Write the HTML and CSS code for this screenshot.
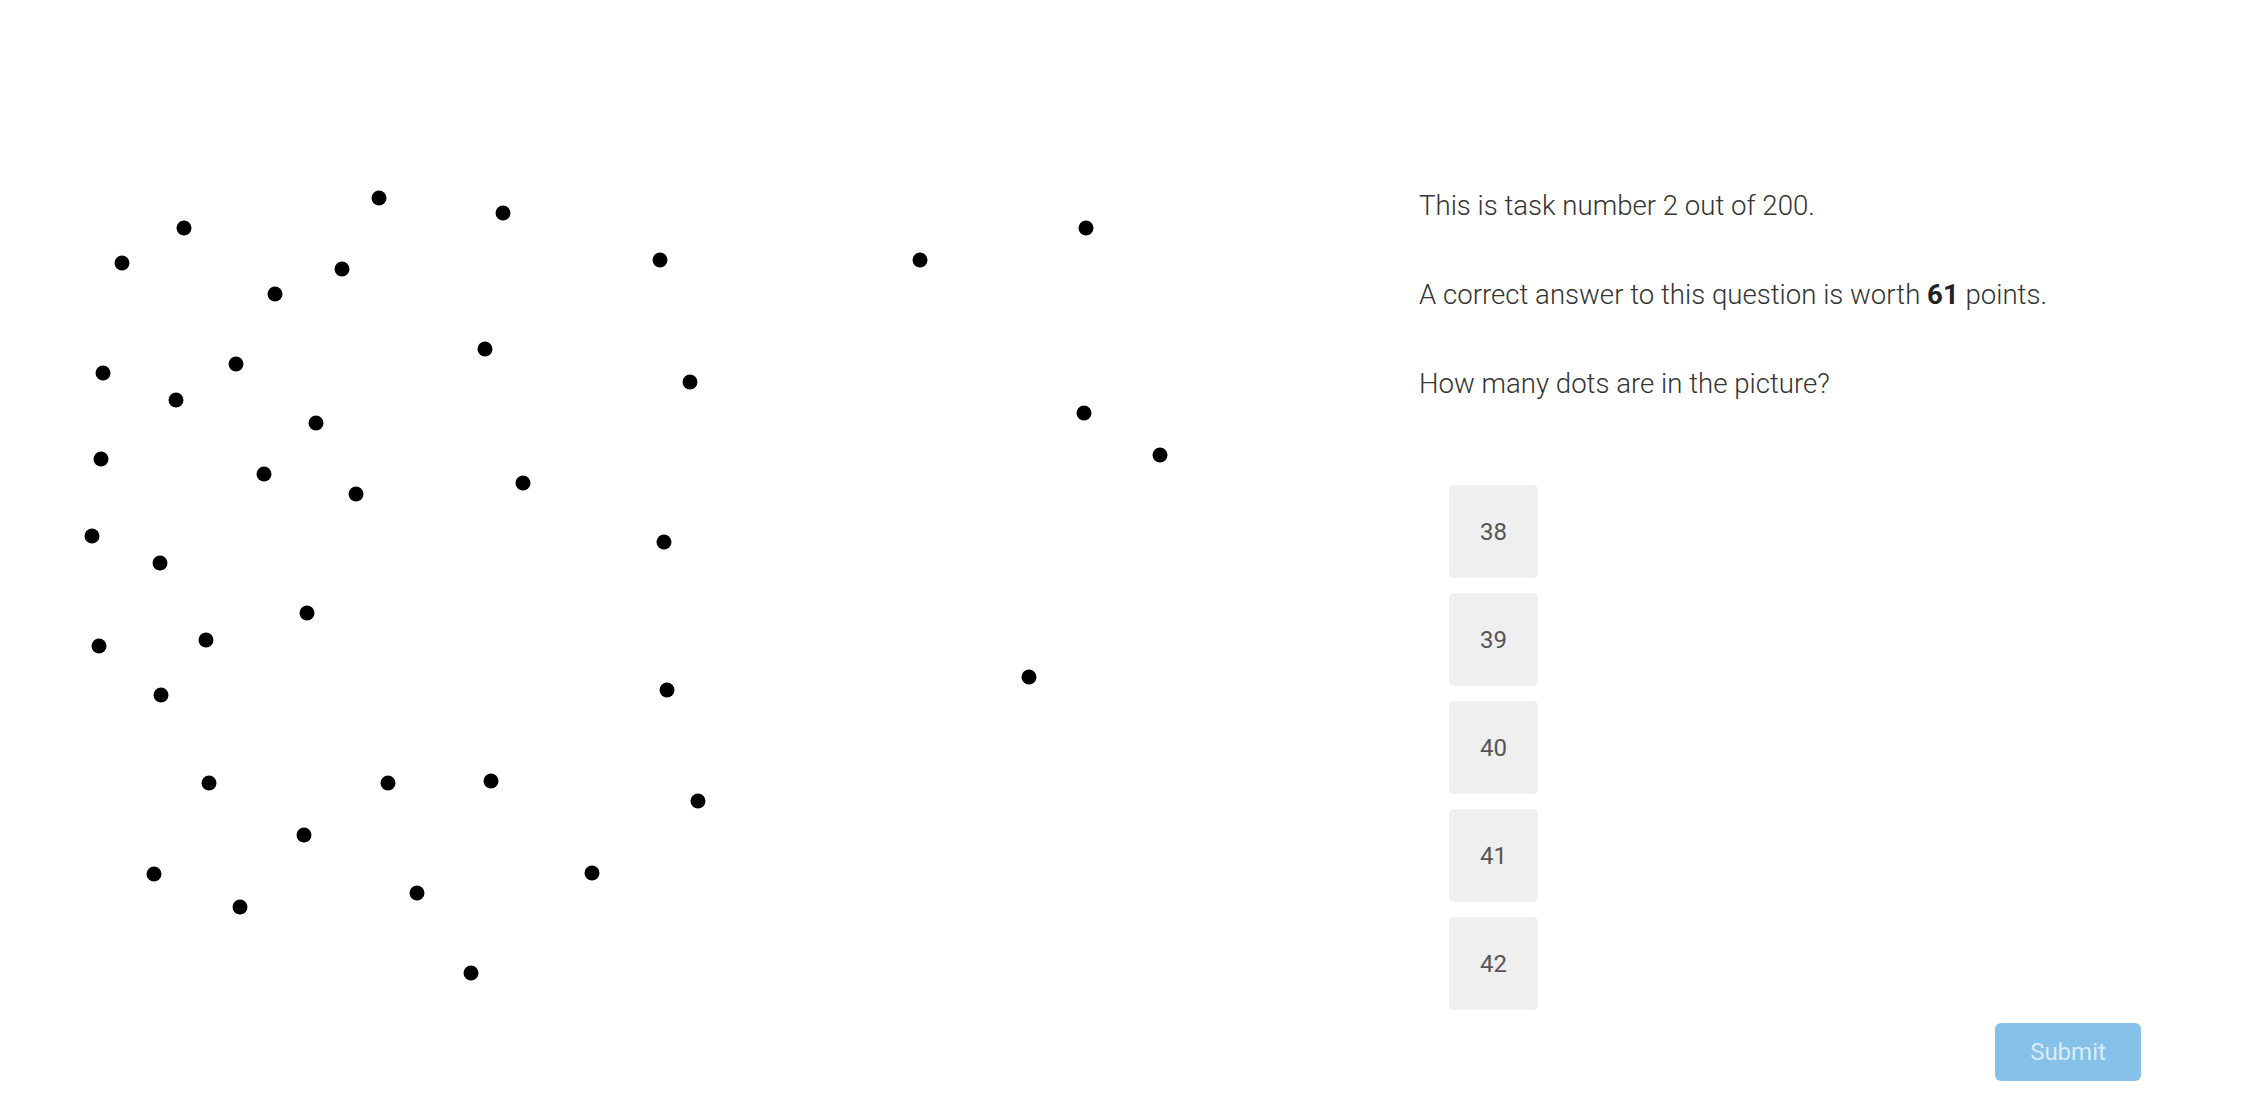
FILE: index.html
```html
<!DOCTYPE html>
<html lang="en">
<head>
<meta charset="utf-8">
<title>Dot counting task</title>
<link rel="stylesheet" href="styles.css">
</head>
<body>
<main class="page">
  <section class="picture">
    <svg class="dots" width="1419" height="1000" viewBox="0 0 1419 1000" xmlns="http://www.w3.org/2000/svg">
      <g fill="#000">
        <circle cx="379" cy="198" r="7.5"/>
        <circle cx="503" cy="213" r="7.5"/>
        <circle cx="184" cy="228" r="7.5"/>
        <circle cx="122" cy="263" r="7.5"/>
        <circle cx="342" cy="269" r="7.5"/>
        <circle cx="275" cy="294" r="7.5"/>
        <circle cx="485" cy="349" r="7.5"/>
        <circle cx="236" cy="364" r="7.5"/>
        <circle cx="103" cy="373" r="7.5"/>
        <circle cx="176" cy="400" r="7.5"/>
        <circle cx="316" cy="423" r="7.5"/>
        <circle cx="101" cy="459" r="7.5"/>
        <circle cx="264" cy="474" r="7.5"/>
        <circle cx="356" cy="494" r="7.5"/>
        <circle cx="523" cy="483" r="7.5"/>
        <circle cx="92" cy="536" r="7.5"/>
        <circle cx="160" cy="563" r="7.5"/>
        <circle cx="660" cy="260" r="7.5"/>
        <circle cx="920" cy="260" r="7.5"/>
        <circle cx="1086" cy="228" r="7.5"/>
        <circle cx="690" cy="382" r="7.5"/>
        <circle cx="1084" cy="413" r="7.5"/>
        <circle cx="1160" cy="455" r="7.5"/>
        <circle cx="664" cy="542" r="7.5"/>
        <circle cx="307" cy="613" r="7.5"/>
        <circle cx="99" cy="646" r="7.5"/>
        <circle cx="206" cy="640" r="7.5"/>
        <circle cx="161" cy="695" r="7.5"/>
        <circle cx="209" cy="783" r="7.5"/>
        <circle cx="388" cy="783" r="7.5"/>
        <circle cx="491" cy="781" r="7.5"/>
        <circle cx="304" cy="835" r="7.5"/>
        <circle cx="154" cy="874" r="7.5"/>
        <circle cx="240" cy="907" r="7.5"/>
        <circle cx="417" cy="893" r="7.5"/>
        <circle cx="592" cy="873" r="7.5"/>
        <circle cx="471" cy="973" r="7.5"/>
        <circle cx="667" cy="690" r="7.5"/>
        <circle cx="1029" cy="677" r="7.5"/>
        <circle cx="698" cy="801" r="7.5"/>
      </g>
    </svg>
  </section>
  <section class="panel">
    <p class="line">This is task number 2 out of 200.</p>
    <p class="line">A correct answer to this question is worth <strong>61</strong> points.</p>
    <p class="line">How many dots are in the picture?</p>
    <div class="options">
      <button class="option" type="button">38</button>
      <button class="option" type="button">39</button>
      <button class="option" type="button">40</button>
      <button class="option" type="button">41</button>
      <button class="option" type="button">42</button>
    </div>
    <div class="actions">
      <button class="submit" type="button" disabled>Submit</button>
    </div>
  </section>
</main>
</body>
</html>
```
FILE: styles.css
```css
html, body {
  margin: 0;
  padding: 0;
  background: #ffffff;
}

body {
  font-family: Roboto, "Liberation Sans", Arial, sans-serif;
  color: #333333;
}

.page {
  display: grid;
  grid-template-columns: 1419px 1fr;
  width: 2246px;
  height: 1120px;
  overflow: hidden;
}

.picture {
  display: block;
}

.dots {
  display: block;
}

.panel {
  display: flex;
  flex-direction: column;
  padding-top: 187px;
}

.line {
  margin: 0 0 51px 0;
  font-size: 27.6px;
  font-weight: 300;
  line-height: 38px;
  color: #333333;
  white-space: nowrap;
}

.line strong {
  font-weight: 700;
  color: #222222;
}

.options {
  display: flex;
  flex-direction: column;
  gap: 15px;
  margin-top: 31px;
  margin-left: 30px;
}

.option {
  width: 89px;
  height: 93px;
  border: none;
  border-radius: 5px;
  background: #efefef;
  color: #555555;
  font-family: Roboto, "Liberation Sans", Arial, sans-serif;
  font-size: 24px;
  font-weight: 400;
  padding: 0;
}

.actions {
  display: flex;
  justify-content: flex-end;
  padding-right: 105px;
  margin-top: 13px;
}

.submit {
  width: 146px;
  height: 58px;
  border: none;
  border-radius: 6px;
  background: #85c1e9;
  color: #d9ecf9;
  font-family: Roboto, "Liberation Sans", Arial, sans-serif;
  font-size: 24px;
  font-weight: 400;
  padding: 0;
}
```
